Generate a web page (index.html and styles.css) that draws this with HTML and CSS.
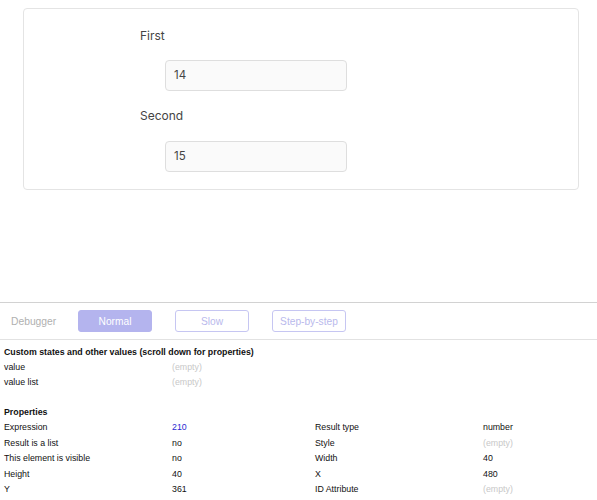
FILE: index.html
```html
<!DOCTYPE html>
<html>
<head>
<meta charset="utf-8">
<link rel="stylesheet" href="styles.css">
</head>
<body>
<div class="page">
  <div class="card">
    <div class="field">
      <div class="label">First</div>
      <div class="input">14</div>
    </div>
    <div class="field second">
      <div class="label">Second</div>
      <div class="input">15</div>
    </div>
  </div>
</div>
<div class="debugger">
  <div class="toolbar">
    <span class="dbg-title">Debugger</span>
    <span class="btn active">Normal</span>
    <span class="btn">Slow</span>
    <span class="btn">Step-by-step</span>
  </div>
  <div class="inspector">
    <div class="heading">Custom states and other values (scroll down for properties)</div>
    <div class="grid states">
      <div>value</div><div class="empty">(empty)</div><div></div><div></div>
      <div>value list</div><div class="empty">(empty)</div><div></div><div></div>
    </div>
    <div class="heading props">Properties</div>
    <div class="grid">
      <div>Expression</div><div class="link">210</div><div>Result type</div><div>number</div>
      <div>Result is a list</div><div>no</div><div>Style</div><div class="empty">(empty)</div>
      <div>This element is visible</div><div>no</div><div>Width</div><div>40</div>
      <div>Height</div><div>40</div><div>X</div><div>480</div>
      <div>Y</div><div>361</div><div>ID Attribute</div><div class="empty">(empty)</div>
    </div>
  </div>
</div>
</body>
</html>
```

FILE: styles.css
```css
html, body {
  margin: 0;
  padding: 0;
  background: #ffffff;
}

.page {
  padding: 8px 18px 0 23px;
  height: 302px;
  box-sizing: border-box;
}

.card {
  width: 556px;
  height: 182px;
  box-sizing: border-box;
  border: 1px solid #e4e4e4;
  border-radius: 4px;
  padding: 19px 0 0 116px;
  font-family: Inter, "Open Sans", sans-serif;
  font-size: 12px;
  color: #444;
}

.label {
  line-height: 15px;
  height: 15px;
}

.input {
  margin: 17px 0 0 25px;
  width: 182px;
  height: 31px;
  box-sizing: border-box;
  border: 1px solid #dedede;
  border-radius: 4px;
  background: #fafafa;
  padding: 0 8px;
  line-height: 29px;
  color: #444;
  font-size: 11.5px;
}

.second {
  margin-top: 17px;
}

.second .input {
  margin-top: 18px;
}

.debugger {
  font-family: "Liberation Sans", Arial, sans-serif;
  color: #111;
}

.toolbar {
  border-top: 1px solid #d2d2d2;
  border-bottom: 1px solid #e2e2e2;
  height: 36px;
  display: flex;
  align-items: center;
  padding-left: 11px;
}

.dbg-title {
  font-size: 10.3px;
  color: #b0b0b0;
  width: 67px;
}

.btn {
  width: 74px;
  height: 22px;
  box-sizing: border-box;
  border: 1px solid #c6c6f2;
  border-radius: 3px;
  color: #b9b9ec;
  font-size: 10.2px;
  display: flex;
  align-items: center;
  justify-content: center;
  margin-right: 23px;
}

.btn.active {
  background: #b4b4ee;
  border-color: #b4b4ee;
  color: #ffffff;
}

.inspector {
  padding: 5px 0 0 4px;
  font-size: 8.8px;
}

.heading {
  font-weight: bold;
  line-height: 15px;
}

.heading.props {
  margin-top: 15px;
}

.grid {
  display: grid;
  grid-template-columns: 168px 143px 168px 1fr;
  grid-auto-rows: 15.5px;
  line-height: 15.5px;
}

.grid.states {
  grid-auto-rows: 15px;
  line-height: 15px;
}

.empty {
  color: #c8c8c8;
}

.link {
  color: #2a2ad0;
}
```
